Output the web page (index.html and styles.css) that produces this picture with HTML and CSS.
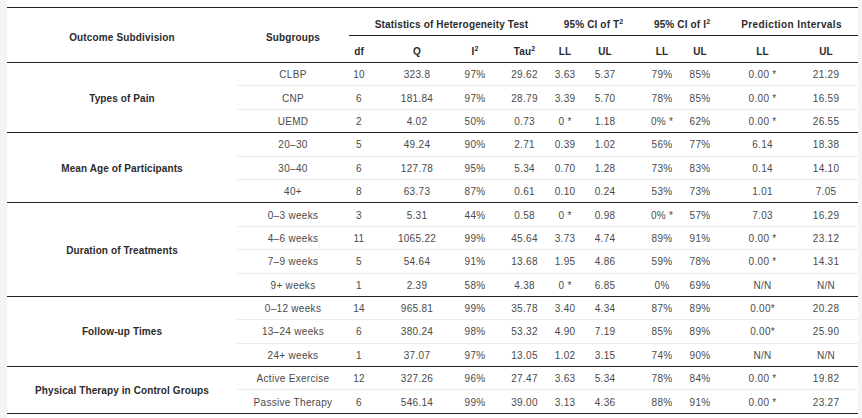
FILE: index.html
```html
<!DOCTYPE html>
<html>
<head>
<meta charset="utf-8">
<link rel="stylesheet" href="styles.css">
</head>
<body>
<div class="panel">
<table class="het">
  <colgroup>
    <col class="c-outcome"><col class="c-sub"><col class="c-df"><col class="c-q"><col class="c-i2"><col class="c-tau"><col class="c-tll"><col class="c-tul"><col class="c-ill"><col class="c-iul"><col class="c-pll"><col class="c-pul">
  </colgroup>
  <thead>
    <tr class="h1">
      <th rowspan="2" class="last-h">Outcome Subdivision</th>
      <th rowspan="2" class="last-h">Subgroups</th>
      <th colspan="4" class="grp shift-r">Statistics of Heterogeneity Test</th>
      <th colspan="2" class="grp shift-r">95% CI of T<sup>2</sup></th>
      <th colspan="2" class="grp">95% CI of I<sup>2</sup></th>
      <th colspan="2" class="grp shift-l wide">Prediction Intervals</th>
    </tr>
    <tr class="h2">
      <th class="df">df</th><th>Q</th><th class="i2">I<sup>2</sup></th><th class="tau">Tau<sup>2</sup></th>
      <th>LL</th><th class="ul1">UL</th><th class="ll2">LL</th><th class="ul2">UL</th><th>LL</th><th>UL</th>
    </tr>
  </thead>
  <tbody class="group">
    <tr><td rowspan="3" class="label">Types of Pain</td><td>CLBP</td><td class="df">10</td><td>323.8</td><td class="i2">97%</td><td class="tau">29.62</td><td>3.63</td><td class="ul1">5.37</td><td class="ll2">79%</td><td class="ul2">85%</td><td>0.00 *</td><td>21.29</td></tr>
    <tr><td>CNP</td><td class="df">6</td><td>181.84</td><td class="i2">97%</td><td class="tau">28.79</td><td>3.39</td><td class="ul1">5.70</td><td class="ll2">78%</td><td class="ul2">85%</td><td>0.00 *</td><td>16.59</td></tr>
    <tr><td>UEMD</td><td class="df">2</td><td>4.02</td><td class="i2">50%</td><td class="tau">0.73</td><td>0 *</td><td class="ul1">1.18</td><td class="ll2">0% *</td><td class="ul2">62%</td><td>0.00 *</td><td>26.55</td></tr>
  </tbody>
  <tbody class="group">
    <tr><td rowspan="3" class="label">Mean Age of Participants</td><td>20–30</td><td class="df">5</td><td>49.24</td><td class="i2">90%</td><td class="tau">2.71</td><td>0.39</td><td class="ul1">1.02</td><td class="ll2">56%</td><td class="ul2">77%</td><td>6.14</td><td>18.38</td></tr>
    <tr><td>30–40</td><td class="df">6</td><td>127.78</td><td class="i2">95%</td><td class="tau">5.34</td><td>0.70</td><td class="ul1">1.28</td><td class="ll2">73%</td><td class="ul2">83%</td><td>0.14</td><td>14.10</td></tr>
    <tr><td>40+</td><td class="df">8</td><td>63.73</td><td class="i2">87%</td><td class="tau">0.61</td><td>0.10</td><td class="ul1">0.24</td><td class="ll2">53%</td><td class="ul2">73%</td><td>1.01</td><td>7.05</td></tr>
  </tbody>
  <tbody class="group">
    <tr><td rowspan="4" class="label">Duration of Treatments</td><td>0–3 weeks</td><td class="df">3</td><td>5.31</td><td class="i2">44%</td><td class="tau">0.58</td><td>0 *</td><td class="ul1">0.98</td><td class="ll2">0% *</td><td class="ul2">57%</td><td>7.03</td><td>16.29</td></tr>
    <tr><td>4–6 weeks</td><td class="df">11</td><td>1065.22</td><td class="i2">99%</td><td class="tau">45.64</td><td>3.73</td><td class="ul1">4.74</td><td class="ll2">89%</td><td class="ul2">91%</td><td>0.00 *</td><td>23.12</td></tr>
    <tr><td>7–9 weeks</td><td class="df">5</td><td>54.64</td><td class="i2">91%</td><td class="tau">13.68</td><td>1.95</td><td class="ul1">4.86</td><td class="ll2">59%</td><td class="ul2">78%</td><td>0.00 *</td><td>14.31</td></tr>
    <tr><td>9+ weeks</td><td class="df">1</td><td>2.39</td><td class="i2">58%</td><td class="tau">4.38</td><td>0 *</td><td class="ul1">6.85</td><td class="ll2">0%</td><td class="ul2">69%</td><td>N/N</td><td>N/N</td></tr>
  </tbody>
  <tbody class="group">
    <tr><td rowspan="3" class="label">Follow-up Times</td><td>0–12 weeks</td><td class="df">14</td><td>965.81</td><td class="i2">99%</td><td class="tau">35.78</td><td>3.40</td><td class="ul1">4.34</td><td class="ll2">87%</td><td class="ul2">89%</td><td>0.00*</td><td>20.28</td></tr>
    <tr><td>13–24 weeks</td><td class="df">6</td><td>380.24</td><td class="i2">98%</td><td class="tau">53.32</td><td>4.90</td><td class="ul1">7.19</td><td class="ll2">85%</td><td class="ul2">89%</td><td>0.00*</td><td>25.90</td></tr>
    <tr><td>24+ weeks</td><td class="df">1</td><td>37.07</td><td class="i2">97%</td><td class="tau">13.05</td><td>1.02</td><td class="ul1">3.15</td><td class="ll2">74%</td><td class="ul2">90%</td><td>N/N</td><td>N/N</td></tr>
  </tbody>
  <tbody class="group">
    <tr><td rowspan="2" class="label">Physical Therapy in Control Groups</td><td>Active Exercise</td><td class="df">12</td><td>327.26</td><td class="i2">96%</td><td class="tau">27.47</td><td>3.63</td><td class="ul1">5.34</td><td class="ll2">78%</td><td class="ul2">84%</td><td>0.00 *</td><td>19.82</td></tr>
    <tr><td>Passive Therapy</td><td class="df">6</td><td>546.14</td><td class="i2">99%</td><td class="tau">39.00</td><td>3.13</td><td class="ul1">4.36</td><td class="ll2">88%</td><td class="ul2">91%</td><td>0.00 *</td><td>23.27</td></tr>
  </tbody>
</table>
</div>
</body>
</html>
```

FILE: styles.css
```css
html, body {
  margin: 0;
  padding: 0;
  background: #f4f4f4;
}

.panel {
  margin-left: 7px;
  width: 851px;
  background: #ffffff;
  padding-top: 7px;
  min-height: 411px;
}

.het {
  width: 851px;
  table-layout: fixed;
  border-collapse: collapse;
  font-family: "Liberation Sans", Arial, sans-serif;
  font-size: 10px;
  color: #4a4a4a;
}

.c-outcome { width: 230px; }
.c-sub { width: 112px; }
.c-df { width: 39px; }
.c-q { width: 58px; }
.c-i2 { width: 54px; }
.c-tau { width: 45px; }
.c-tll { width: 40px; }
.c-tul { width: 48px; }
.c-ill { width: 48px; }
.c-iul { width: 50px; }
.c-pll { width: 63px; }
.c-pul { width: 64px; }

.het th, .het td {
  padding: 0;
  text-align: center;
  vertical-align: middle;
  white-space: nowrap;
}

.het td {
  letter-spacing: 0.3px;
}

.het th {
  font-weight: bold;
  color: #2b2b2b;
  letter-spacing: 0.15px;
}

.het th.wide {
  letter-spacing: 0.4px;
}

.het sup {
  font-size: 7px;
  line-height: 0;
  vertical-align: 4px;
}

.h1 th {
  border-top: 1px solid #222;
  height: 21px;
  padding-top: 6px;
}

.h1 th.grp {
  border-bottom: 1px solid #222;
}

.h2 th {
  height: 22px;
  padding-top: 4px;
}

.h1 th.last-h {
  padding-top: 5px;
}

.het thead th.last-h,
.h2 th {
  border-bottom: 1px solid #222;
}

.group {
  border-bottom: 1px solid #222;
}

.group td {
  height: 21.4px;
  padding-top: 1px;
  border-top: 1px solid #ececec;
}

.group tr:first-child td {
  border-top: none;
}

.group td.label {
  font-weight: bold;
  color: #2b2b2b;
  border-top: none;
  letter-spacing: 0.1px;
}

.df { padding-right: 19px !important; }
.i2 { padding-left: 4px !important; }
.tau { padding-left: 4px !important; }
.ul1 { padding-right: 8px !important; }
.ll2 { padding-left: 10px !important; }
.ul2 { padding-right: 12px !important; }
.shift-r { padding-left: 9px !important; }
.shift-l { padding-right: 6px !important; }
```
